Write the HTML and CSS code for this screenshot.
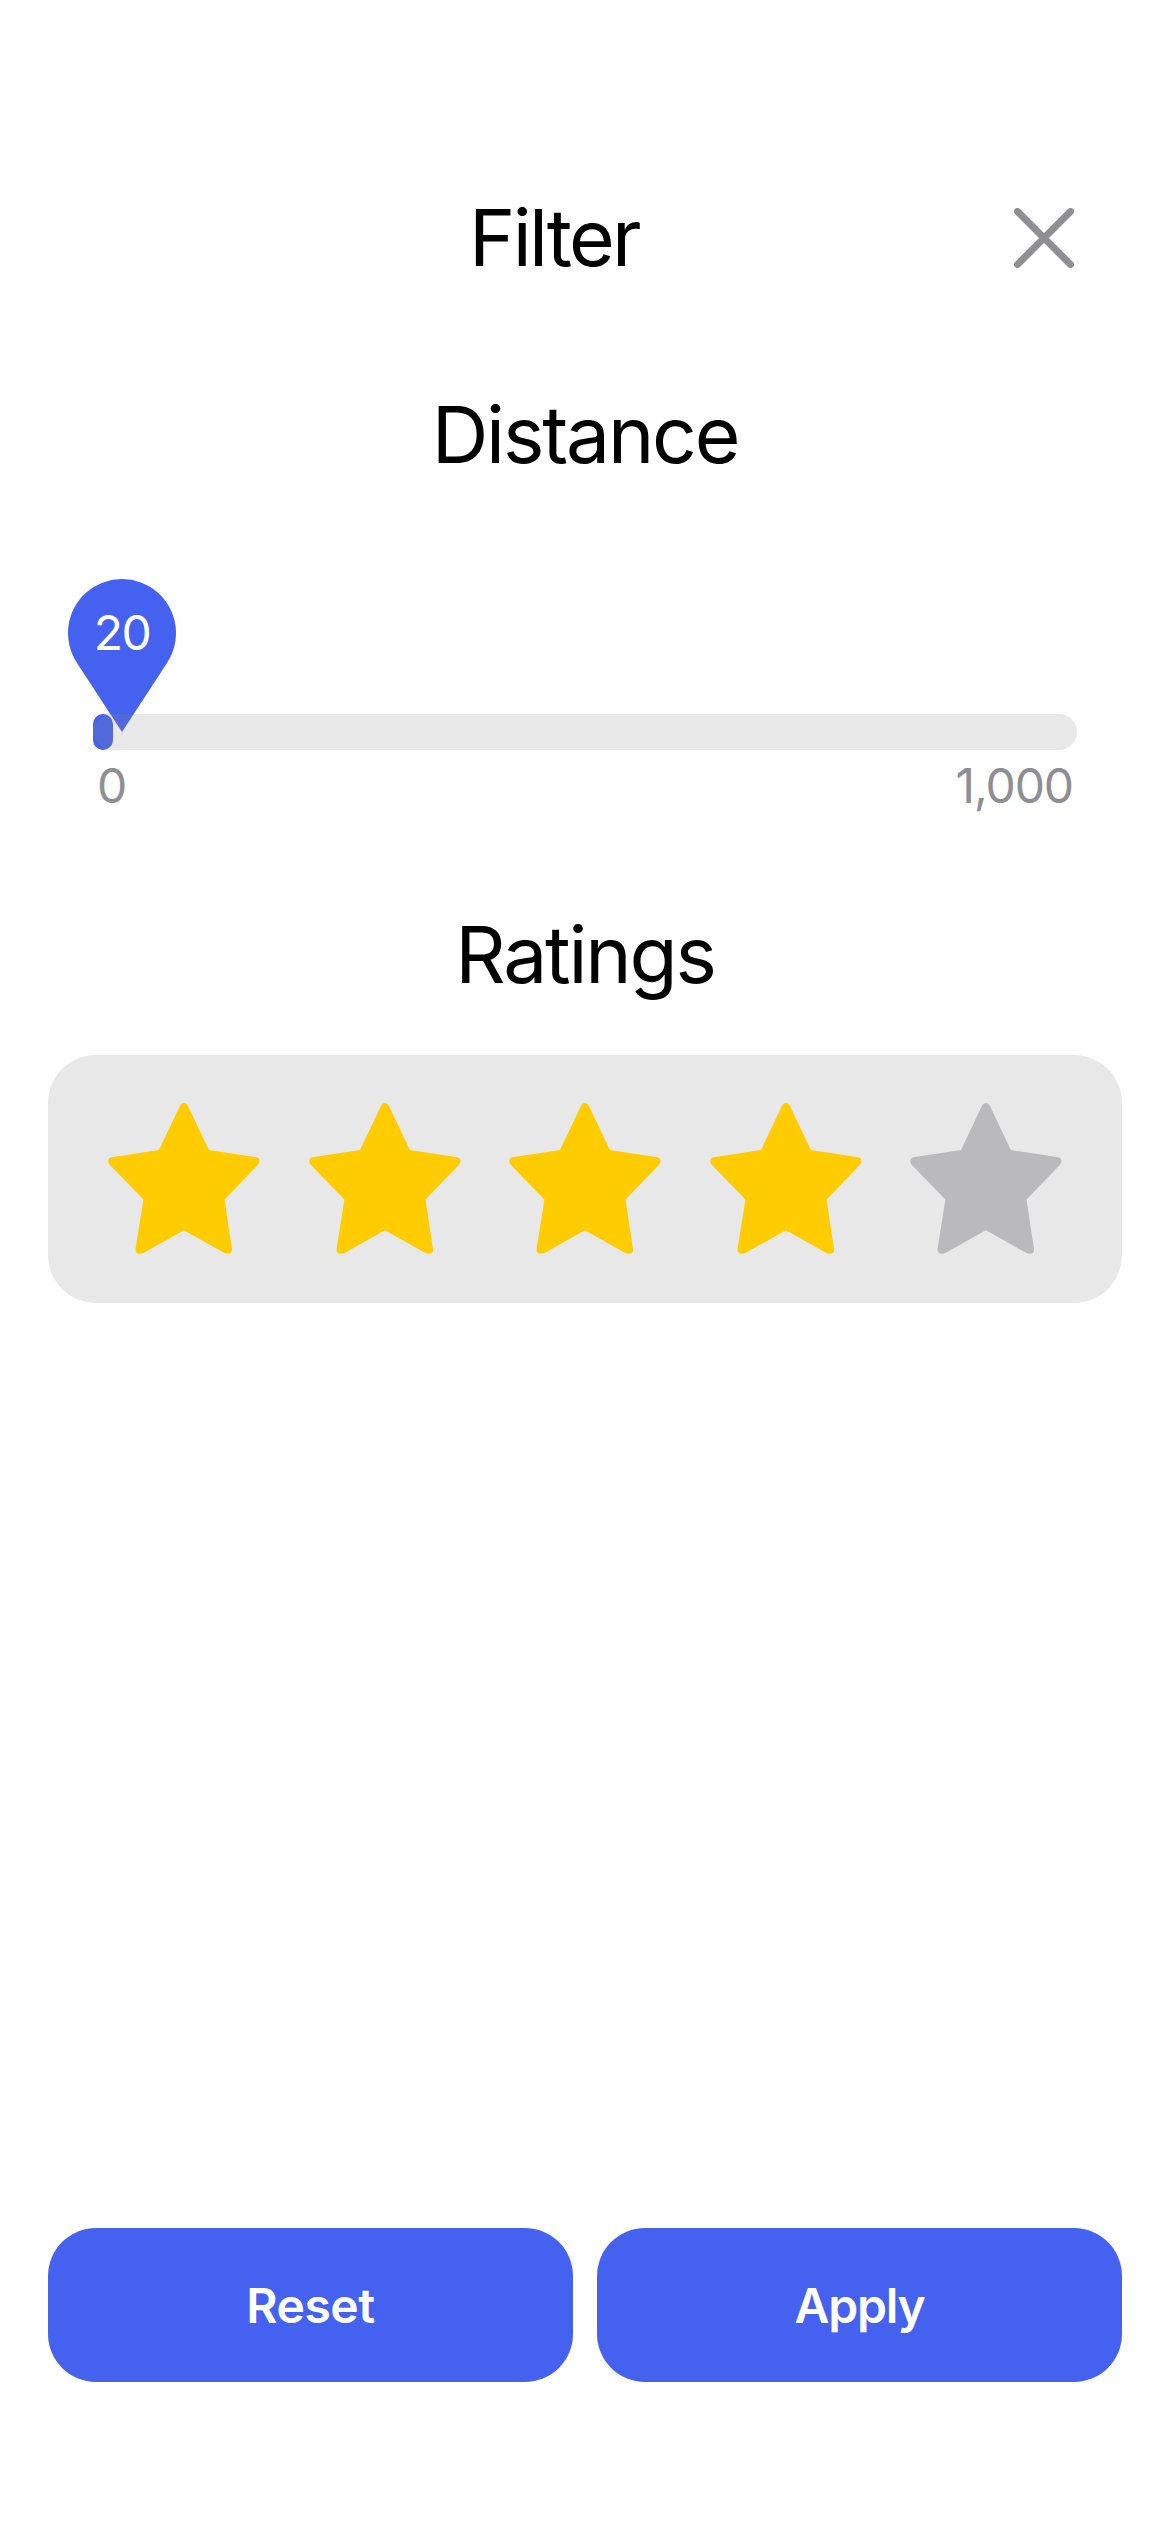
FILE: index.html
```html
<!DOCTYPE html>
<html lang="en">
<head>
<meta charset="utf-8">
<title>Filter</title>
<link rel="stylesheet" href="styles.css">
</head>
<body>
<main class="screen">
  <header class="header">
    <h1 class="title title-filter">Filter</h1>
    <button class="close" aria-label="Close">
      <svg width="60" height="60" viewBox="0 0 60 60"><path d="M3.5 3.5 56.5 56.5M56.5 3.5 3.5 56.5"/></svg>
    </button>
  </header>

  <h2 class="title title-distance">Distance</h2>
  <section class="slider">
    <div class="pin">
      <svg width="108" height="153" viewBox="0 0 108 153"><path d="M54 153 8.7 83.4A54 54 0 1 1 99.3 83.4Z"/></svg>
      <span class="pin-value">20</span>
    </div>
    <div class="track"><div class="fill" style="width: 20px"></div><div class="track-tint"></div></div>
    <div class="range"><span class="range-min">0</span><span class="range-max">1,000</span></div>
  </section>

  <h2 class="title title-ratings">Ratings</h2>
  <svg class="defs" width="0" height="0"><symbol id="star" viewBox="0 0 152 152"><path d="M72 2.8C73.7-.8 77.9-.8 79.8 2.8L100.9 47.1 148.3 54.2C152 54.9 152.5 59 149.5 62.3L116.5 96.4 124 146.2C124.3 150.3 120.6 152.1 116 149.8L75.9 127.3 35.8 149.8C31.2 152.1 27.2 150.3 27.5 146.2L35.4 96.4 2.2 62.3C-.8 59-.2 54.9 3.5 54.2L51 47.1Z"/></symbol></svg>
  <section class="ratings">
    <svg class="star"><use href="#star"/></svg>
    <svg class="star"><use href="#star"/></svg>
    <svg class="star"><use href="#star"/></svg>
    <svg class="star"><use href="#star"/></svg>
    <svg class="star star-off"><use href="#star"/></svg>
  </section>

  <footer class="actions">
    <button class="action action-reset">Reset</button>
    <button class="action action-apply">Apply</button>
  </footer>
</main>
</body>
</html>
```
FILE: styles.css
```css
* { box-sizing: border-box; }
body {
  margin: 0;
  background: #fff;
  color: #000;
  font-family: Inter, "Liberation Sans", sans-serif;
}
button { border: 0; padding: 0; background: none; font: inherit; }
.screen {
  display: flex;
  flex-direction: column;
  height: 2532px;
  padding: 190px 48px 150px;
}
.title {
  margin: 0;
  font-size: 78.5px;
  line-height: 96px;
  font-weight: 400;
  letter-spacing: -2.2px;
  text-align: center;
  white-space: nowrap;
}
.header {
  display: grid;
  grid-template-columns: 60px 1fr 60px;
  align-items: center;
  height: 96px;
  padding-right: 48px;
}
.title-filter {
  grid-column: 2;
  padding-right: 14px;
  letter-spacing: -2.6px;
}
.close { display: flex; }
.close path { stroke: #8e8e93; stroke-width: 7; stroke-linecap: round; }
.title-distance { margin-top: 101px; }
.slider {
  display: flex;
  flex-direction: column;
  margin: 96px 45px 0;
}
.pin {
  display: grid;
  width: 108px;
  height: 153px;
  margin: 0 0 -18px -25px;
}
.pin svg, .pin-value { grid-area: 1 / 1; }
.pin path { fill: #4461ef; }
.pin-value {
  height: 108px;
  line-height: 108px;
  font-size: 48px;
  font-weight: 400;
  letter-spacing: -1.5px;
  text-align: center;
  color: #fff;
}
.track {
  display: grid;
  width: 984px;
  height: 36px;
}
.fill, .track-tint { grid-area: 1 / 1; z-index: 1; }
.fill { border-radius: 10px; background: #4461ef; }
.track-tint { border-radius: 18px; background: rgba(142, 142, 147, .2); }
.range {
  display: flex;
  justify-content: space-between;
  padding: 6px 4px 0;
  font-size: 48px;
  line-height: 60px;
  letter-spacing: -1.1px;
  color: #8e8e93;
}
.title-ratings { margin-top: 91px; }
.defs { position: absolute; }
.ratings {
  display: flex;
  justify-content: space-between;
  align-items: center;
  height: 248px;
  margin-top: 52px;
  padding: 0 60px;
  border-radius: 48px;
  background: #e8e8e8;
}
.star { width: 152px; height: 152px; fill: #ffcc02; }
.star-off { fill: #bababc; }
.actions {
  display: grid;
  grid-template-columns: 1fr 1fr;
  gap: 24px;
  margin-top: auto;
}
.action {
  height: 154px;
  border-radius: 48px;
  background: #4461ef;
  color: #fff;
  font-size: 48px;
  font-weight: 600;
  letter-spacing: -.5px;
}
.action-apply { letter-spacing: -1.2px; }
```
